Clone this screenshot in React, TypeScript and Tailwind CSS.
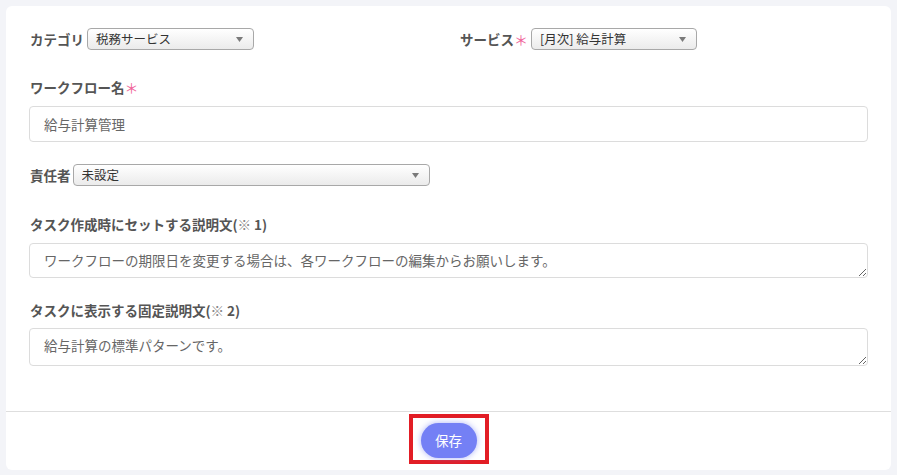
import React from 'react';

const font = { fontFamily: '"Noto Sans CJK JP", "Noto Sans", sans-serif' };

const Req = () => <span className="text-[14px] leading-none font-normal text-[#f0649a]">＊</span>;

const Note = ({ n }: { n: string }) => (
  <>
    (<span className="font-normal text-[#888]">※</span>
    <span className="ml-[3px]">{n}</span>)
  </>
);

const Select: React.FC<{ value: string; className?: string }> = ({ value, className }) => (
  <div
    className={`flex h-[22px] items-center justify-between rounded-[4px] border border-[#a8a8a8] bg-gradient-to-b from-white to-[#ebebeb] pr-[10px] pl-[8px] text-[12.5px] text-[#333] ${className ?? ''}`}
  >
    <span className="truncate">{value}</span>
    <svg width="7" height="5" viewBox="0 0 7 5" className="mt-[1px]">
      <path d="M0 0h7L3.5 5z" fill="#7a7a7a" />
    </svg>
  </div>
);

const Label: React.FC<{ children: React.ReactNode; className?: string }> = ({ children, className }) => (
  <div className={`flex h-[18px] items-center text-[13.5px] font-bold text-[#555] ${className ?? ''}`}>{children}</div>
);

export default function App() {
  return (
    <div className="min-h-[475px] bg-[#f3f4f8] p-[6px]" style={font}>
      <div className="flex flex-col rounded-[6px] bg-white">
        <div className="flex flex-col px-[23px] pt-[22px] pb-[45px]">
          <div className="flex items-center">
            <div className="flex w-[431px] items-center">
              <Label className="mr-[3px] ml-[1px]">カテゴリ</Label>
              <Select value="税務サービス" className="w-[167px]" />
            </div>
            <div className="flex items-center">
              <Label className="mr-[3px]">
                サービス
                <Req />
              </Label>
              <Select value="[月次] 給与計算" className="w-[166px]" />
            </div>
          </div>

          <Label className="mt-[28px] ml-[1px]">
            ワークフロー名
            <Req />
          </Label>
          <input
            readOnly
            value="給与計算管理"
            className="mt-[10px] h-[36px] w-full rounded-[4px] border border-[#dcdcdc] px-[14px] text-[13.5px] text-[#666] outline-none"
          />

          <div className="mt-[22px] flex items-center">
            <Label className="mr-[2px] ml-[1px]">責任者</Label>
            <Select value="未設定" className="w-[357px]" />
          </div>

          <Label className="mt-[29px] ml-[1px]">
            タスク作成時にセットする説明文<Note n="1" />
          </Label>
          <textarea
            readOnly
            value="ワークフローの期限日を変更する場合は、各ワークフローの編集からお願いします。"
            className="mt-[10px] block h-[35px] w-full resize-y rounded-[4px] border border-[#dcdcdc] px-[14px] py-[6px] text-[13.5px] leading-[20px] text-[#666] outline-none"
          />

          <Label className="mt-[23px] ml-[1px]">
            タスクに表示する固定説明文<Note n="2" />
          </Label>
          <textarea
            readOnly
            value="給与計算の標準パターンです。"
            className="mt-[9px] block h-[38px] w-full resize-y rounded-[4px] border border-[#dcdcdc] px-[14px] py-[6px] text-[13.5px] leading-[20px] text-[#666] outline-none"
          />
        </div>

        <div className="flex justify-center border-t border-[#dedede] pt-[2px] pb-[6px]">
          <div className="border-4 border-[#e21d25] px-[8px] pt-[5px] pb-[2px]">
            <button className="h-[35px] w-[56px] rounded-full bg-[#7480f5] text-[13.5px] text-white shadow-[0_0_6px_rgba(116,128,245,0.6)]">
              保存
            </button>
          </div>
        </div>
      </div>
    </div>
  );
}
